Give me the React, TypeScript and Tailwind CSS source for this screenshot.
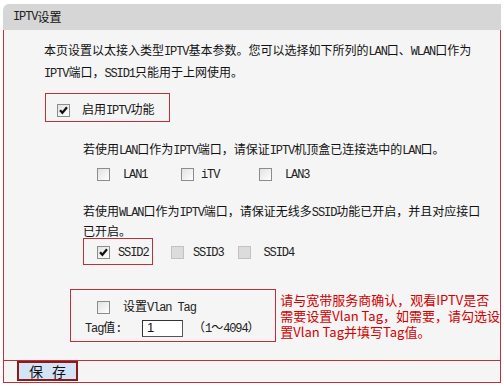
import React from "react";

function Mix({ t }: { t: string }) {
  const parts = t.split(/([!-~]+(?: [!-~]+)*)/);
  return (
    <>
      {parts.map((p, i) =>
        i % 2 === 1 ? (
          <span key={i} className="font-['Liberation_Mono',monospace] text-[12px] tracking-[-1.1px] text-[#222]">
            {p}
          </span>
        ) : (
          <React.Fragment key={i}>{p}</React.Fragment>
        )
      )}
    </>
  );
}

function Box({ checked, disabled }: { checked?: boolean; disabled?: boolean }) {
  if (disabled) {
    return <span className="inline-flex w-[13px] h-[13px] shrink-0 border border-[#c2c2c2] bg-[#dcdcdc]" />;
  }
  return (
    <span className="inline-flex w-[13px] h-[13px] shrink-0 items-center justify-center border border-[#8c8c8c] bg-gradient-to-br from-[#e2e2e2] to-white">
      {checked && (
        <svg width="9" height="9" viewBox="0 0 9 9">
          <path d="M1 4.2 L3.4 6.8 L8 1.3" stroke="#111" strokeWidth="2.2" fill="none" />
        </svg>
      )}
    </span>
  );
}

export default function App() {
  return (
    <div className="w-[504px] h-[387px] bg-white pt-[4px] pl-[3px] text-[12px] text-[#111] font-['Noto_Sans_CJK_SC',sans-serif] overflow-hidden">
      <div className="w-[498px]">
        <div className="h-[26px] bg-[#d6d6d6] rounded-tl-[6px] pl-[10px] flex items-center">
          <Mix t="IPTV设置" />
        </div>
        <div className="border-x border-b border-[#c0303a] bg-[#f5f5f5]">
          <div className="h-[330px] flex flex-col">
            <div className="ml-[40px] mt-[10px] leading-[20px] whitespace-nowrap">
              <div>
                <Mix t="本页设置以太接入类型IPTV基本参数。您可以选择如下所列的LAN口、WLAN口作为" />
              </div>
              <div>
                <Mix t="IPTV端口，SSID1只能用于上网使用。" />
              </div>
            </div>

            <div className="ml-[41px] mt-[9px] w-[125px] h-[29px] border border-[#c0303a] flex items-center pl-[11px] pt-[5px]">
              <Box checked />
              <span className="ml-[12px] whitespace-nowrap">
                <Mix t="启用IPTV功能" />
              </span>
            </div>

            <div className="ml-[79px] mt-[17px] leading-[20px] whitespace-nowrap">
              <Mix t="若使用LAN口作为IPTV端口，请保证IPTV机顶盒已连接选中的LAN口。" />
            </div>

            <div className="ml-[93px] mt-[3px] h-[20px] flex items-center">
              <div className="w-[84px] flex items-center">
                <Box />
                <span className="ml-[13px]">
                  <Mix t="LAN1" />
                </span>
              </div>
              <div className="w-[78px] flex items-center">
                <Box />
                <span className="ml-[7px]">
                  <Mix t="iTV" />
                </span>
              </div>
              <div className="flex items-center">
                <Box />
                <span className="ml-[13px]">
                  <Mix t="LAN3" />
                </span>
              </div>
            </div>

            <div className="ml-[79px] mt-[18px] leading-[18px] whitespace-nowrap">
              <div>
                <Mix t="若使用WLAN口作为IPTV端口，请保证无线多SSID功能已开启，并且对应接口" />
              </div>
              <div>已开启。</div>
            </div>

            <div className="ml-[79px] mt-[-2px] h-[27px] flex items-center">
              <div className="w-[70px] h-[27px] border border-[#c0303a] flex items-center pl-[13px] pt-[1px]">
                <Box checked />
                <span className="ml-[8px]">
                  <Mix t="SSID2" />
                </span>
              </div>
              <div className="ml-[18px] flex items-center pt-[1px]">
                <Box disabled />
                <span className="ml-[9px]">
                  <Mix t="SSID3" />
                </span>
              </div>
              <div className="ml-[14px] flex items-center pt-[1px]">
                <Box disabled />
                <span className="ml-[13px]">
                  <Mix t="SSID4" />
                </span>
              </div>
            </div>

            <div className="mt-[24px] flex items-start">
              <div className="ml-[66px] w-[210px] h-[53px] border border-[#c0303a] flex flex-col">
                <div className="mt-[9px] h-[16px] pl-[26px] flex items-center">
                  <Box />
                  <span className="ml-[13px] whitespace-nowrap">
                    <Mix t="设置Vlan Tag" />
                  </span>
                </div>
                <div className="mt-[4px] h-[18px] pl-[14px] flex items-center whitespace-nowrap">
                  <span className="w-[57px]">
                    <Mix t="Tag值:" />
                  </span>
                  <div className="w-[41px] h-[17px] border border-[#555] border-t-[#333] border-l-[#333] bg-white flex items-center pl-[4px] text-[13px] font-['Liberation_Sans',sans-serif]">
                    1
                  </div>
                  <span className="ml-[10px]">
                    <Mix t="（1～4094）" />
                  </span>
                </div>
              </div>
              <div className="ml-[4px] mt-[3px] text-[13px] leading-[16px] text-[#d20000] whitespace-nowrap">
                <div>请与宽带服务商确认，观看IPTV是否</div>
                <div>需要设置Vlan Tag，如需要，请勾选设</div>
                <div>置Vlan Tag并填写Tag值。</div>
              </div>
            </div>
          </div>
          <div className="border-t border-[#c0303a] h-[22px] pl-[13px]">
            <button className="w-[61px] h-[20px] border-2 border-[#8b1a1a] bg-[#d4e4f7] text-[14px] leading-none flex items-center justify-center gap-[9px] text-[#111]">
              <span>保</span>
              <span>存</span>
            </button>
          </div>
        </div>
      </div>
    </div>
  );
}
